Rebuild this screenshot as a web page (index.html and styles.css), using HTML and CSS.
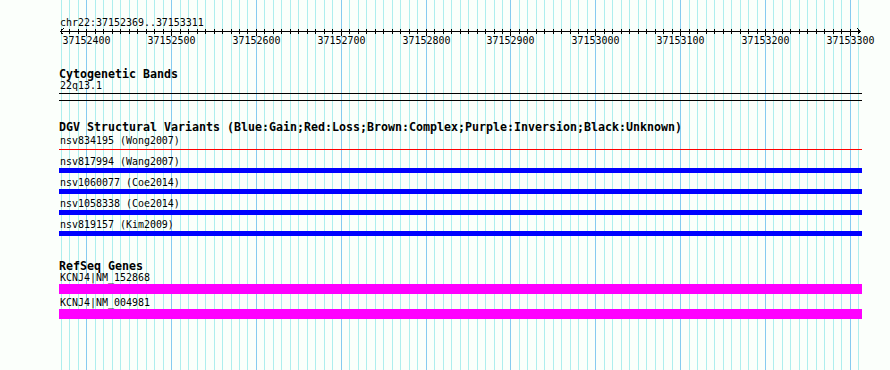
FILE: index.html
```html
<!DOCTYPE html>
<html>
<head>
<meta charset="utf-8">
<title>chr22:37152369..37153311</title>
<link rel="stylesheet" href="styles.css">
</head>
<body>
<div class="page">
  <svg class="grid" width="890" height="370" viewBox="0 0 890 370" aria-hidden="true">
    <path class="grid-minor" d="M61.5 0V370M69.5 0V370M78.5 0V370M95.5 0V370M103.5 0V370M112.5 0V370M120.5 0V370M129.5 0V370M137.5 0V370M146.5 0V370M154.5 0V370M163.5 0V370M180.5 0V370M188.5 0V370M197.5 0V370M205.5 0V370M214.5 0V370M222.5 0V370M231.5 0V370M239.5 0V370M247.5 0V370M264.5 0V370M273.5 0V370M281.5 0V370M290.5 0V370M298.5 0V370M307.5 0V370M315.5 0V370M324.5 0V370M332.5 0V370M349.5 0V370M358.5 0V370M366.5 0V370M375.5 0V370M383.5 0V370M392.5 0V370M400.5 0V370M409.5 0V370M417.5 0V370M434.5 0V370M443.5 0V370M451.5 0V370M460.5 0V370M468.5 0V370M477.5 0V370M485.5 0V370M494.5 0V370M502.5 0V370M519.5 0V370M527.5 0V370M536.5 0V370M544.5 0V370M553.5 0V370M561.5 0V370M570.5 0V370M578.5 0V370M587.5 0V370M604.5 0V370M612.5 0V370M621.5 0V370M629.5 0V370M638.5 0V370M646.5 0V370M655.5 0V370M663.5 0V370M672.5 0V370M689.5 0V370M697.5 0V370M706.5 0V370M714.5 0V370M723.5 0V370M731.5 0V370M740.5 0V370M748.5 0V370M757.5 0V370M773.5 0V370M782.5 0V370M790.5 0V370M799.5 0V370M807.5 0V370M816.5 0V370M824.5 0V370M833.5 0V370M841.5 0V370M858.5 0V370"/>
    <path class="grid-major" d="M86.5 0V370M171.5 0V370M256.5 0V370M341.5 0V370M426.5 0V370M510.5 0V370M595.5 0V370M680.5 0V370M765.5 0V370M850.5 0V370"/>
  </svg>

  <div class="content">
    <div class="locus">chr22:37152369..37153311</div>

    <svg class="ruler" width="831" height="20" viewBox="59 0 831 20">
      <path class="axis" d="M60 3.5H861M60.5 3.5L63.5 0.5M60.5 3.5L63.5 6.5M860.5 3.5L857.5 0.5M860.5 3.5L857.5 6.5"/>
      <path class="axis" d="M61.5 1v5M69.5 1v5M78.5 1v5M95.5 1v5M103.5 1v5M112.5 1v5M120.5 1v5M129.5 1v5M137.5 1v5M146.5 1v5M154.5 1v5M163.5 1v5M180.5 1v5M188.5 1v5M197.5 1v5M205.5 1v5M214.5 1v5M222.5 1v5M231.5 1v5M239.5 1v5M247.5 1v5M264.5 1v5M273.5 1v5M281.5 1v5M290.5 1v5M298.5 1v5M307.5 1v5M315.5 1v5M324.5 1v5M332.5 1v5M349.5 1v5M358.5 1v5M366.5 1v5M375.5 1v5M383.5 1v5M392.5 1v5M400.5 1v5M409.5 1v5M417.5 1v5M434.5 1v5M443.5 1v5M451.5 1v5M460.5 1v5M468.5 1v5M477.5 1v5M485.5 1v5M494.5 1v5M502.5 1v5M519.5 1v5M527.5 1v5M536.5 1v5M544.5 1v5M553.5 1v5M561.5 1v5M570.5 1v5M578.5 1v5M587.5 1v5M604.5 1v5M612.5 1v5M621.5 1v5M629.5 1v5M638.5 1v5M646.5 1v5M655.5 1v5M663.5 1v5M672.5 1v5M689.5 1v5M697.5 1v5M706.5 1v5M714.5 1v5M723.5 1v5M731.5 1v5M740.5 1v5M748.5 1v5M757.5 1v5M773.5 1v5M782.5 1v5M790.5 1v5M799.5 1v5M807.5 1v5M816.5 1v5M824.5 1v5M833.5 1v5M841.5 1v5M858.5 1v5"/>
      <path class="axis" d="M86.5 1v7M171.5 1v7M256.5 1v7M341.5 1v7M426.5 1v7M510.5 1v7M595.5 1v7M680.5 1v7M765.5 1v7M850.5 1v7"/>
      <g class="ruler-labels">
        <text x="86.5" y="16">37152400</text>
        <text x="171.5" y="16">37152500</text>
        <text x="256.5" y="16">37152600</text>
        <text x="341.5" y="16">37152700</text>
        <text x="426.5" y="16">37152800</text>
        <text x="510.5" y="16">37152900</text>
        <text x="595.5" y="16">37153000</text>
        <text x="680.5" y="16">37153100</text>
        <text x="765.5" y="16">37153200</text>
        <text x="850.5" y="16">37153300</text>
      </g>
    </svg>

    <section class="track">
      <div class="track-title">Cytogenetic Bands</div>
      <div class="feat-label">22q13.1</div>
      <div class="chrom-band"></div>
    </section>

    <section class="track">
      <div class="track-title">DGV Structural Variants (Blue:Gain;Red:Loss;Brown:Complex;Purple:Inversion;Black:Unknown)</div>
      <div class="sv-rows">
        <div class="sv-row">
          <div class="feat-label">nsv834195 (Wong2007)</div>
          <div class="sv-area"><div class="sv-line loss"></div></div>
        </div>
        <div class="sv-row">
          <div class="feat-label">nsv817994 (Wang2007)</div>
          <div class="sv-area"><div class="sv-bar gain"></div></div>
        </div>
        <div class="sv-row">
          <div class="feat-label">nsv1060077 (Coe2014)</div>
          <div class="sv-area"><div class="sv-bar gain"></div></div>
        </div>
        <div class="sv-row">
          <div class="feat-label">nsv1058338 (Coe2014)</div>
          <div class="sv-area"><div class="sv-bar gain"></div></div>
        </div>
        <div class="sv-row">
          <div class="feat-label">nsv819157 (Kim2009)</div>
          <div class="sv-area"><div class="sv-bar gain"></div></div>
        </div>
      </div>
    </section>

    <section class="track">
      <div class="track-title">RefSeq Genes</div>
      <div class="gene-row">
        <div class="feat-label">KCNJ4|NM_152868</div>
        <div class="gene-bar"></div>
      </div>
      <div class="gene-row">
        <div class="feat-label">KCNJ4|NM_004981</div>
        <div class="gene-bar"></div>
      </div>
    </section>
  </div>
</div>
</body>
</html>
```

FILE: styles.css
```css
html, body {
  margin: 0;
  padding: 0;
}

body {
  background: #fbfffb;
  width: 890px;
  height: 370px;
  overflow: hidden;
  font-family: "DejaVu Sans Mono", "Liberation Mono", monospace;
  color: #000;
}

.page {
  position: relative;
  width: 890px;
  height: 370px;
}

.grid {
  position: absolute;
  top: 0;
  left: 0;
  z-index: 0;
}

.grid-minor {
  stroke: #aeeeee;
  stroke-width: 1;
  fill: none;
  shape-rendering: crispEdges;
}

.grid-major {
  stroke: #86cbf0;
  stroke-width: 1;
  fill: none;
  shape-rendering: crispEdges;
}

.content {
  position: relative;
  z-index: 1;
  padding: 17px 0 0 59px;
  width: 803px;
}

.locus,
.feat-label {
  font-size: 9.965px;
  line-height: 11px;
  height: 11px;
  padding-left: 1px;
  white-space: nowrap;
}

.ruler {
  display: block;
  height: 20px;
  overflow: visible;
  shape-rendering: crispEdges;
}

.axis {
  stroke: #000;
  stroke-width: 1;
  fill: none;
}

.ruler-labels text {
  font-family: "DejaVu Sans Mono", "Liberation Mono", monospace;
  font-size: 9.965px;
  text-anchor: middle;
  fill: #000;
}

.track {
  margin-top: 20px;
}

.track-title {
  font-size: 11.63px;
  font-weight: bold;
  line-height: 12px;
  height: 12px;
  white-space: nowrap;
}

.chrom-band {
  margin-top: 2px;
  height: 6px;
  border-top: 1px solid #000;
  border-bottom: 1px solid #000;
}

.sv-rows {
  margin-top: 2px;
}

.sv-row {
  display: flex;
  flex-direction: column;
  height: 21px;
}

.sv-area {
  margin-top: 1px;
  height: 5px;
  display: flex;
  flex-direction: column;
}

.sv-bar {
  height: 5px;
}

.sv-line {
  margin-top: 2px;
  height: 1px;
}

.gain { background: #0000ff; }
.loss { background: #ff0000; }

.gene-row {
  display: flex;
  flex-direction: column;
  margin-bottom: 3px;
}

.gene-bar {
  margin-top: 1px;
  height: 10px;
  background: #ff00ff;
}
```
